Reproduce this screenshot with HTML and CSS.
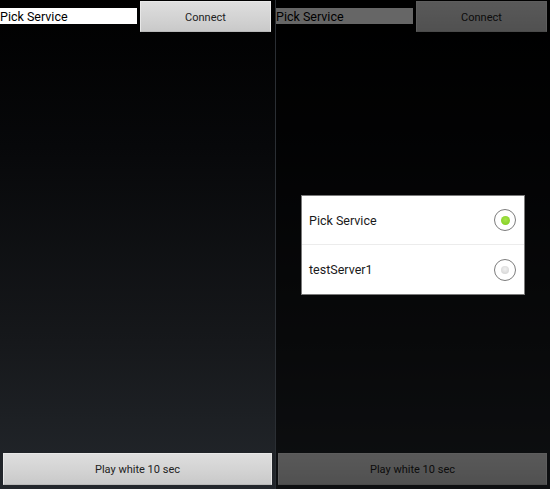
FILE: index.html
```html
<!DOCTYPE html>
<html>
<head>
<meta charset="utf-8">
<link rel="stylesheet" href="styles.css">
</head>
<body>
<div class="screens">
  <div class="screen">
    <div class="top-row">
      <div class="field">Pick Service</div>
      <div class="btn btn-connect">Connect</div>
    </div>
    <div class="spacer"></div>
    <div class="btn btn-play">Play white 10 sec</div>
  </div>
  <div class="divider"></div>
  <div class="screen">
    <div class="top-row">
      <div class="field">Pick Service</div>
      <div class="btn btn-connect">Connect</div>
    </div>
    <div class="spacer"></div>
    <div class="btn btn-play">Play white 10 sec</div>
    <div class="dim"></div>
    <div class="dialog">
      <div class="option">
        <span class="label">Pick Service</span>
        <span class="radio checked"><span class="dot"></span></span>
      </div>
      <div class="option">
        <span class="label">testServer1</span>
        <span class="radio"><span class="dot"></span></span>
      </div>
    </div>
  </div>
</div>
</body>
</html>
```

FILE: styles.css
```css
html, body {
  margin: 0;
  padding: 0;
  background: #000;
}
body {
  font-family: Roboto, "Liberation Sans", sans-serif;
  width: 550px;
  height: 489px;
  overflow: hidden;
}
.screens {
  display: flex;
  height: 489px;
}
.screen {
  position: relative;
  width: 275px;
  display: flex;
  flex-direction: column;
  background: linear-gradient(to bottom, #000000 0%, #07080a 30%, #16181b 70%, #23272c 100%);
}
.divider {
  width: 1px;
  background: #2a2e33;
}
.screen:last-child {
  width: 274px;
}
.top-row {
  display: flex;
  align-items: flex-start;
}
.field {
  margin-top: 8px;
  width: 137px;
  height: 16px;
  background: #fff;
  color: #000;
  font-size: 12.5px;
  line-height: 17px;
  white-space: nowrap;
}
.btn {
  box-sizing: border-box;
  background: linear-gradient(to bottom, #dedede 0%, #d2d2d2 60%, #c9c9c9 100%);
  border: 1px solid #e8e8e8;
  border-bottom-color: #b8b8b8;
  color: #222;
  font-size: 11px;
  display: flex;
  align-items: center;
  justify-content: center;
}
.btn-connect {
  margin-top: 1px;
  margin-left: 3px;
  width: 131px;
  height: 31px;
  padding-top: 2px;
}
.spacer {
  flex: 1;
}
.btn-play {
  margin: 0 3px 4px 3px;
  height: 32px;
  padding-top: 1px;
}
.screen:last-child .btn-play {
  margin-left: 2px;
}
.dim {
  position: absolute;
  inset: 0;
  background: rgba(0, 0, 0, 0.6);
}
.dialog {
  position: absolute;
  left: 25px;
  top: 195px;
  width: 224px;
  box-sizing: border-box;
  background: #fff;
  border: 1px solid #7a7a7a;
}
.option {
  height: 48px;
  display: flex;
  align-items: center;
  justify-content: space-between;
  padding: 0 8px 0 7px;
  font-size: 12.5px;
  color: #1a1a1a;
}
.option + .option {
  border-top: 1px solid #ececec;
  height: 49px;
}
.radio {
  width: 20px;
  height: 20px;
  border: 1.5px solid #7c7c7c;
  border-radius: 50%;
  display: flex;
  align-items: center;
  justify-content: center;
  background: #fff;
}
.dot {
  width: 8px;
  height: 8px;
  border-radius: 50%;
  background: radial-gradient(circle at 50% 40%, #f0f0f0, #cfcfcf);
}
.radio.checked .dot {
  width: 9px;
  height: 9px;
  background: radial-gradient(circle at 50% 40%, #a6e34a, #7ccb1c);
}
```
